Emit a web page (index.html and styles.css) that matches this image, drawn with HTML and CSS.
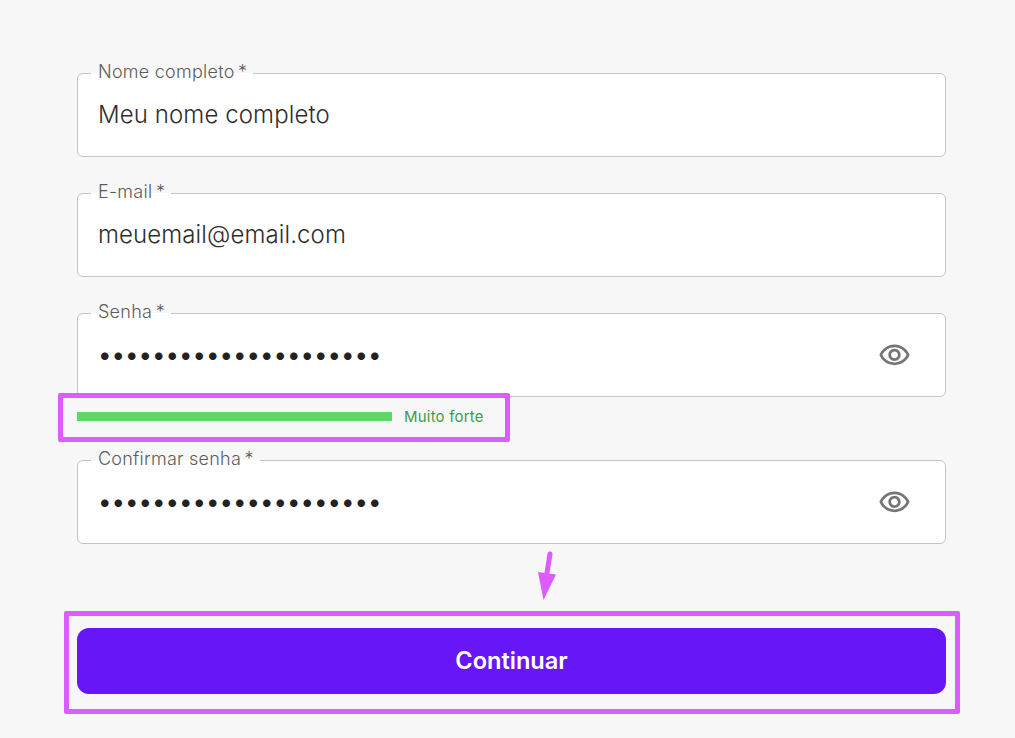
FILE: index.html
```html
<!DOCTYPE html>
<html lang="pt-BR">
<head>
<meta charset="utf-8">
<title>Cadastro</title>
<link rel="stylesheet" href="styles.css">
</head>
<body>
<form class="form">
  <div class="field">
    <span class="label">Nome completo&thinsp;*</span>
    <div class="value">Meu nome completo</div>
  </div>
  <div class="field">
    <span class="label">E-mail&thinsp;*</span>
    <div class="value">meuemail@email.com</div>
  </div>
  <div class="field">
    <span class="label">Senha&thinsp;*</span>
    <div class="value dots">•••••••••••••••••••••</div>
    <svg class="eye" viewBox="0 0 24 24" aria-hidden="true"><path d="M12 6c3.79 0 7.17 2.13 8.82 5.5C19.17 14.87 15.79 17 12 17s-7.17-2.13-8.82-5.5C4.83 8.13 8.21 6 12 6m0-2C7 4 2.73 7.11 1 11.5 2.73 15.89 7 19 12 19s9.27-3.11 11-7.5C21.27 7.11 17 4 12 4zm0 5c1.38 0 2.5 1.12 2.5 2.5S13.38 14 12 14s-2.5-1.12-2.5-2.5S10.62 9 12 9m0-2c-2.48 0-4.5 2.02-4.5 4.5S9.52 16 12 16s4.5-2.02 4.5-4.5S14.48 7 12 7z"/></svg>
  </div>
  <div class="strength">
    <div class="strength-bar"></div>
    <span class="strength-text">Muito forte</span>
  </div>
  <div class="field field-after-strength">
    <span class="label">Confirmar senha&thinsp;*</span>
    <div class="value dots">•••••••••••••••••••••</div>
    <svg class="eye" viewBox="0 0 24 24" aria-hidden="true"><path d="M12 6c3.79 0 7.17 2.13 8.82 5.5C19.17 14.87 15.79 17 12 17s-7.17-2.13-8.82-5.5C4.83 8.13 8.21 6 12 6m0-2C7 4 2.73 7.11 1 11.5 2.73 15.89 7 19 12 19s9.27-3.11 11-7.5C21.27 7.11 17 4 12 4zm0 5c1.38 0 2.5 1.12 2.5 2.5S13.38 14 12 14s-2.5-1.12-2.5-2.5S10.62 9 12 9m0-2c-2.48 0-4.5 2.02-4.5 4.5S9.52 16 12 16s4.5-2.02 4.5-4.5S14.48 7 12 7z"/></svg>
  </div>
  <button class="submit" type="button">Continuar</button>
</form>
<div class="mark mark-strength"></div>
<div class="mark mark-button"></div>
<svg class="arrow" viewBox="0 0 30 56" aria-hidden="true">
  <path class="arrow-line" d="M16 4 L12.5 26"/>
  <path class="arrow-head" d="M4 22 L22 24.500 L9.500 50 Z"/>
</svg>
</body>
</html>
```
FILE: styles.css
```css
* { box-sizing: border-box; }
html, body { height: 100%; }
body {
  margin: 0;
  background: #f7f7f7;
  font-family: Inter, "Liberation Sans", sans-serif;
  overflow: hidden;
}
.form {
  display: flex;
  flex-direction: column;
  gap: 36px;
  width: 869px;
  margin: 73px 0 0 77px;
}
.field {
  position: relative;
  display: flex;
  align-items: center;
  justify-content: space-between;
  height: 84px;
  padding: 0 35px 0 20px;
  background: #fff;
  border: 1px solid #c4c4c4;
  border-radius: 6px;
}
.label {
  position: absolute;
  top: -15px;
  left: 13px;
  padding: 0 6px 2px 7px;
  font-size: 18px;
  font-weight: 300;
  letter-spacing: 0.25px;
  line-height: 26px;
  color: #5c5c5c;
  white-space: nowrap;
  background: linear-gradient(#f7f7f7 50%, #fff 50%);
}
.value {
  font-size: 24px;
  font-weight: 300;
  letter-spacing: 0.1px;
  line-height: 30px;
  color: #2e2e2e;
}
.dots {
  color: #222;
  font-weight: 400;
  letter-spacing: 0;
}
.eye {
  width: 33px;
  height: 33px;
  fill: #757575;
  margin-right: -1px;
}
.strength {
  display: flex;
  align-items: center;
  gap: 12px;
  height: 19px;
  margin-top: -26px;
}
.strength-bar {
  width: 315px;
  height: 9px;
  background: #5fd66b;
}
.strength-text {
  font-size: 15px;
  letter-spacing: 0.2px;
  line-height: 19px;
  color: #3f9c4b;
}
.field-after-strength { margin-top: -2px; }
.submit {
  height: 66px;
  margin-top: 48px;
  padding: 0 0 2px;
  border: 0;
  border-radius: 12px;
  background: #6717f7;
  color: #fff;
  font: 600 23.6px Inter, "Liberation Sans", sans-serif;
}
.mark {
  position: absolute;
  border: 5px solid #dc5cff;
  border-radius: 2px;
}
.mark-strength { left: 58px; top: 393px; width: 452px; height: 49px; }
.mark-button { left: 64px; top: 611px; width: 896px; height: 103px; }
.arrow {
  position: absolute;
  left: 534px;
  top: 550px;
  width: 30px;
  height: 56px;
}
.arrow-line { fill: none; stroke: #dc5cff; stroke-width: 5; stroke-linecap: round; }
.arrow-head { fill: #dc5cff; }
```
